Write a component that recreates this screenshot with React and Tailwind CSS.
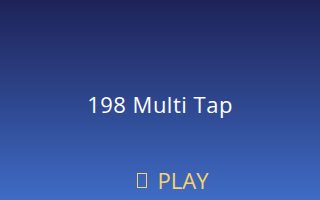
export default function App() {
  return (
    <div
      className="w-[320px] h-[200px] overflow-hidden flex flex-col items-center bg-gradient-to-b from-[#1d2358] to-[#3f6cc6]"
      style={{ fontFamily: '"Open Sans", "Noto Sans", sans-serif' }}
    >
      <div className="mt-[89px] text-[22px] leading-[30px] tracking-[0.5px] text-white">198 Multi Tap</div>
      <div className="mt-[46px] ml-[25px] flex items-center gap-[11px] text-[22px] leading-[30px] text-[#f6d46b]">
        <span className="inline-block w-[10px] h-[15px] border-[1.5px] border-[#f6d46b]" />
        <span>PLAY</span>
      </div>
    </div>
  )
}
